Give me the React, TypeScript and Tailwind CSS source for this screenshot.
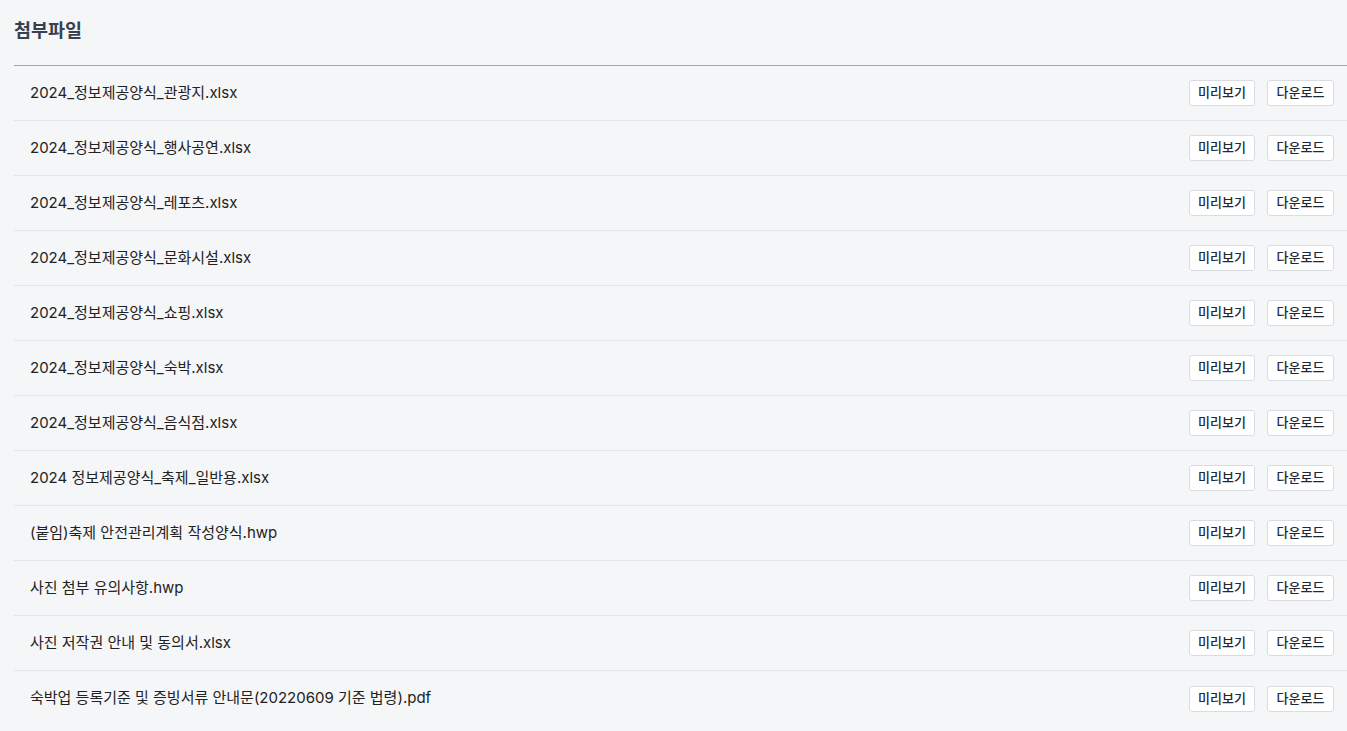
import React from 'react';

const files = [
    '2024_정보제공양식_관광지.xlsx',
    '2024_정보제공양식_행사공연.xlsx',
    '2024_정보제공양식_레포츠.xlsx',
    '2024_정보제공양식_문화시설.xlsx',
    '2024_정보제공양식_쇼핑.xlsx',
    '2024_정보제공양식_숙박.xlsx',
    '2024_정보제공양식_음식점.xlsx',
    '2024 정보제공양식_축제_일반용.xlsx',
    '(붙임)축제 안전관리계획 작성양식.hwp',
    '사진 첨부 유의사항.hwp',
    '사진 저작권 안내 및 동의서.xlsx',
    '숙박업 등록기준 및 증빙서류 안내문(20220609 기준 법령).pdf',
];

const App: React.FC = () => {
    return (
        <div
            className="min-h-screen bg-[#f5f6f8] text-[#1f2937]"
            style={{ fontFamily: 'Inter, "Noto Sans CJK KR", sans-serif' }}
        >
            <div className="pl-[14px]">
                <div className="h-[66px] border-b border-[#a3a8b0] flex items-center pb-[4px]">
                    <h2 className="text-[18.5px] font-bold text-[#374151]">첨부파일</h2>
                </div>
                <ul>
                    {files.map((name) => (
                        <li
                            key={name}
                            className="h-[55px] flex items-center justify-between pl-4 pr-[13px] border-b border-[#e3e5e8] last:border-b-0"
                        >
                            <span className="text-[15px] text-[#222]">{name}</span>
                            <div className="flex gap-3">
                                <button className="h-[26px] w-[66px] bg-white border border-[#d9dde2] rounded-[3px] text-[13px] font-medium text-[#1f2937]">
                                    미리보기
                                </button>
                                <button className="h-[26px] w-[67px] bg-white border border-[#d9dde2] rounded-[3px] text-[13px] font-medium text-[#1f2937]">
                                    다운로드
                                </button>
                            </div>
                        </li>
                    ))}
                </ul>
            </div>
        </div>
    );
};

export default App;
